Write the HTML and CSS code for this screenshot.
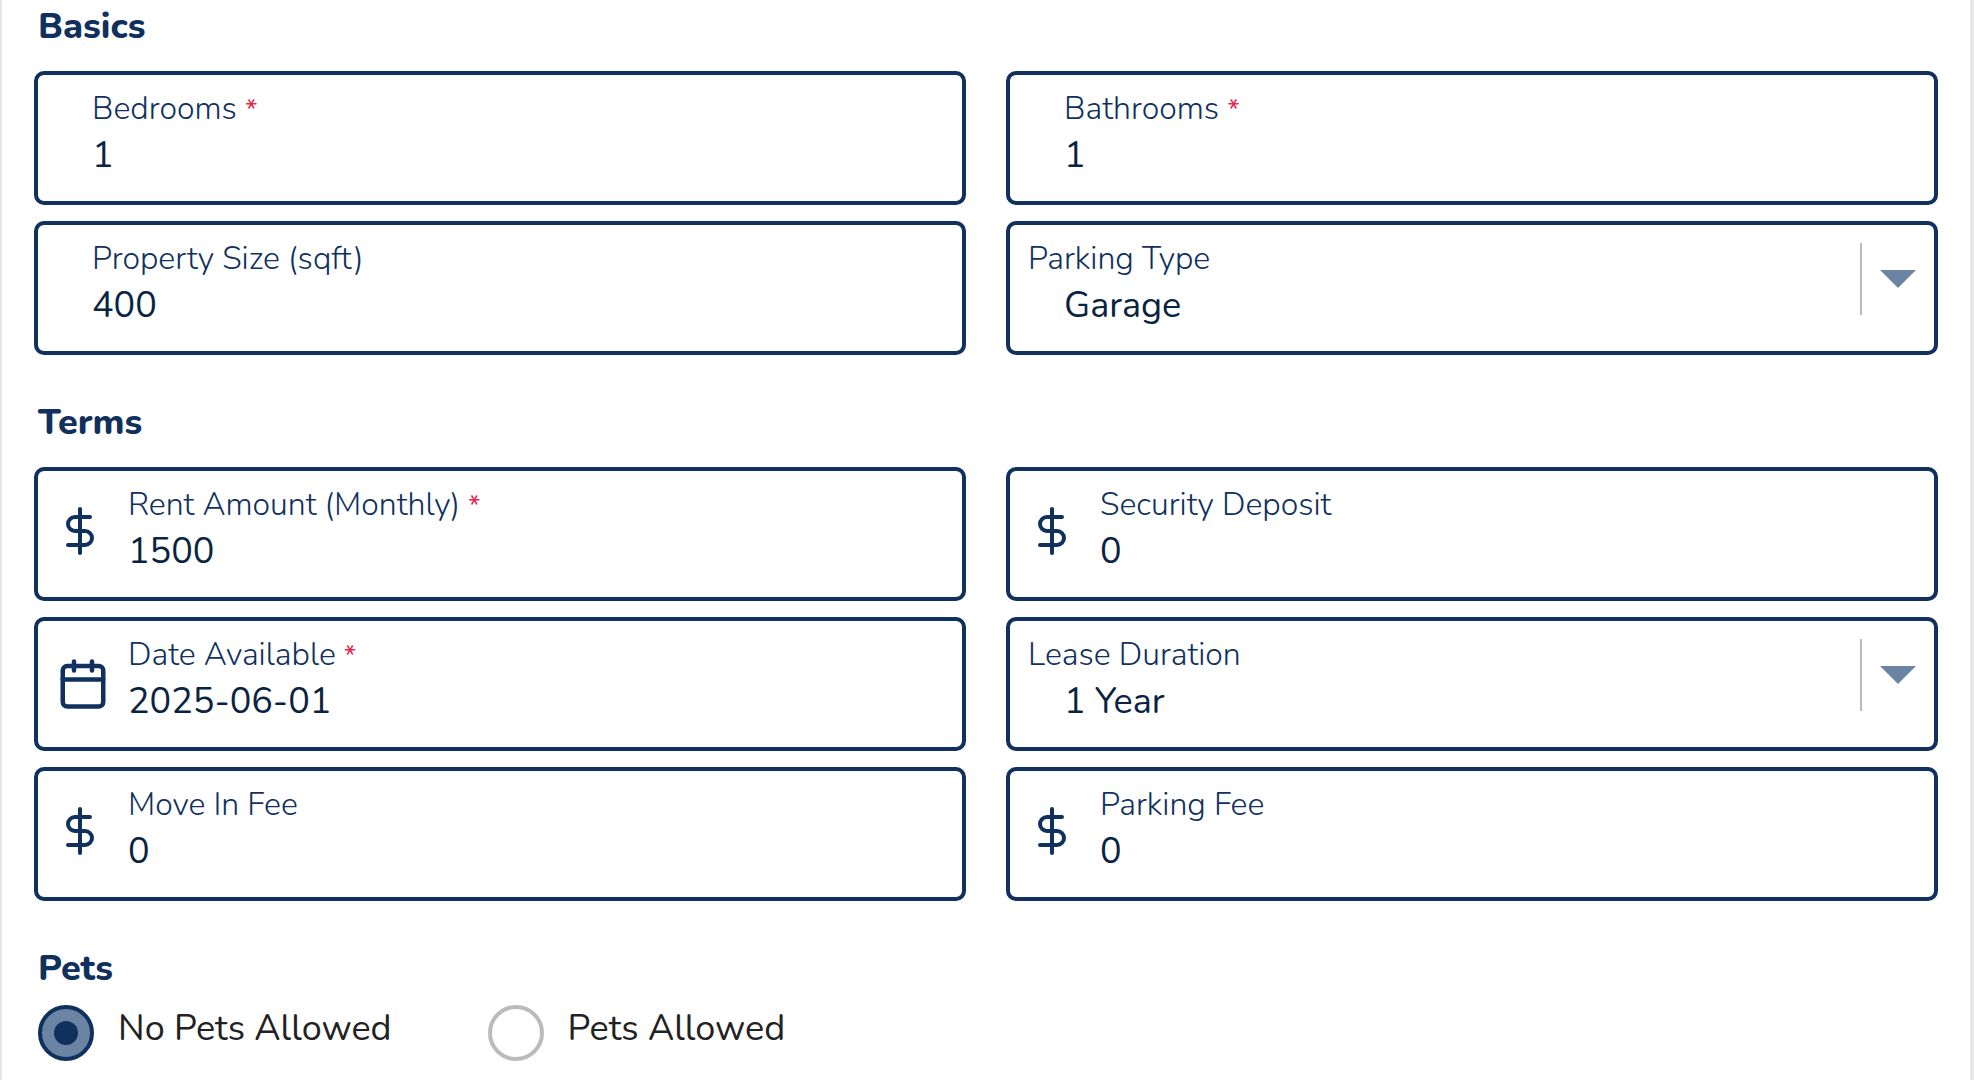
FILE: index.html
```html
<!DOCTYPE html>
<html lang="en">
<head>
<meta charset="utf-8">
<title>Property details</title>
<link rel="stylesheet" href="styles.css">
</head>
<body>
<svg class="sprite" aria-hidden="true">
  <symbol id="icon-dollar" viewBox="0 0 24 24">
    <line x1="12" y1="1" x2="12" y2="23"/>
    <path d="M17 5H9.5a3.5 3.5 0 0 0 0 7h5a3.5 3.5 0 0 1 0 7H6"/>
  </symbol>
  <symbol id="icon-calendar" viewBox="0 0 24 24">
    <rect x="3" y="4" width="18" height="18" rx="2" ry="2"/>
    <line x1="16" y1="2" x2="16" y2="6"/>
    <line x1="8" y1="2" x2="8" y2="6"/>
    <line x1="3" y1="10" x2="21" y2="10"/>
  </symbol>
  <symbol id="icon-caret" viewBox="0 0 36 18">
    <path d="M0 0h36L18 18z"/>
  </symbol>
</svg>
<form class="panel">
  <section class="section">
    <h2 class="section-title">Basics</h2>
    <div class="fields">
      <div class="field">
        <div class="field-body">
          <label class="field-label" for="bedrooms">Bedrooms <span class="required">*</span></label>
          <input class="field-value" id="bedrooms" type="text" value="1" required>
        </div>
      </div>
      <div class="field">
        <div class="field-body">
          <label class="field-label" for="bathrooms">Bathrooms <span class="required">*</span></label>
          <input class="field-value" id="bathrooms" type="text" value="1" required>
        </div>
      </div>
      <div class="field">
        <div class="field-body">
          <label class="field-label" for="size">Property Size (sqft)</label>
          <input class="field-value" id="size" type="text" value="400">
        </div>
      </div>
      <div class="field field-select">
        <div class="field-body">
          <label class="field-label" for="parking">Parking Type</label>
          <select class="field-value" id="parking"><option>Garage</option></select>
        </div>
        <span class="field-arrow"><svg class="caret" aria-hidden="true"><use href="#icon-caret"/></svg></span>
      </div>
    </div>
  </section>

  <section class="section">
    <h2 class="section-title">Terms</h2>
    <div class="fields">
      <div class="field field-with-icon">
        <span class="field-icon"><svg class="icon icon-dollar" aria-hidden="true"><use href="#icon-dollar"/></svg></span>
        <div class="field-body">
          <label class="field-label" for="rent">Rent Amount (Monthly) <span class="required">*</span></label>
          <input class="field-value" id="rent" type="text" value="1500" required>
        </div>
      </div>
      <div class="field field-with-icon">
        <span class="field-icon"><svg class="icon icon-dollar" aria-hidden="true"><use href="#icon-dollar"/></svg></span>
        <div class="field-body">
          <label class="field-label" for="deposit">Security Deposit</label>
          <input class="field-value" id="deposit" type="text" value="0">
        </div>
      </div>
      <div class="field field-with-icon">
        <span class="field-icon"><svg class="icon icon-calendar" aria-hidden="true"><use href="#icon-calendar"/></svg></span>
        <div class="field-body">
          <label class="field-label" for="available">Date Available <span class="required">*</span></label>
          <input class="field-value" id="available" type="text" value="2025-06-01" required>
        </div>
      </div>
      <div class="field field-select">
        <div class="field-body">
          <label class="field-label" for="lease">Lease Duration</label>
          <select class="field-value" id="lease"><option>1 Year</option></select>
        </div>
        <span class="field-arrow"><svg class="caret" aria-hidden="true"><use href="#icon-caret"/></svg></span>
      </div>
      <div class="field field-with-icon">
        <span class="field-icon"><svg class="icon icon-dollar" aria-hidden="true"><use href="#icon-dollar"/></svg></span>
        <div class="field-body">
          <label class="field-label" for="movein">Move In Fee</label>
          <input class="field-value" id="movein" type="text" value="0">
        </div>
      </div>
      <div class="field field-with-icon">
        <span class="field-icon"><svg class="icon icon-dollar" aria-hidden="true"><use href="#icon-dollar"/></svg></span>
        <div class="field-body">
          <label class="field-label" for="parkingfee">Parking Fee</label>
          <input class="field-value" id="parkingfee" type="text" value="0">
        </div>
      </div>
    </div>
  </section>

  <section class="section">
    <h2 class="section-title">Pets</h2>
    <div class="choices">
      <label class="choice"><input class="radio" type="radio" name="pets" checked>No Pets Allowed</label>
      <label class="choice"><input class="radio" type="radio" name="pets">Pets Allowed</label>
    </div>
  </section>
</form>
</body>
</html>
```

FILE: styles.css
```css
:root {
  --navy: #10305e;
  --ink: #0a2342;
  --steel: #6b84a3;
  --gray: #bbbbbb;
  --red: #e8274f;
}

*,
*::before {
  box-sizing: border-box;
}

body {
  margin: 0;
  background: #ffffff;
  font-family: Nunito, Lato, "Open Sans", sans-serif;
  font-size: 36px;
  line-height: 48px;
}

.sprite {
  display: none;
}

.panel {
  min-height: 100vh;
  padding: 3px 32px 16px;
  border-left: 2px solid #e6e6e6;
  border-right: 4px solid #e8e8e8;
}

.section + .section {
  margin-top: 44px;
}

.section-title {
  margin: 0;
  padding-left: 4px;
  color: var(--navy);
  font-size: 36px;
  font-weight: 800;
}

.fields {
  display: grid;
  grid-template-columns: repeat(2, minmax(0, 1fr));
  gap: 16px 40px;
  margin-top: 20px;
}

.field {
  display: flex;
  align-items: flex-start;
  min-height: 134px;
  padding: 12px 16px 12px 54px;
  border: 4px solid var(--navy);
  border-radius: 10px;
}

.field-with-icon {
  padding-left: 18px;
}

.field-select {
  padding-left: 18px;
  padding-right: 18px;
}

.field-body {
  display: flex;
  flex: 1;
  flex-direction: column;
  gap: 1px;
  min-width: 0;
}

.field-label {
  color: var(--navy);
  font-size: 32px;
  font-weight: 340;
  line-height: 44px;
}

.required {
  color: var(--red);
  font-size: 28px;
  font-weight: 400;
  line-height: 1;
}

.field-value {
  width: 100%;
  height: 48px;
  margin: 0;
  padding: 0;
  border: 0;
  outline: 0;
  appearance: none;
  background: transparent;
  color: var(--ink);
  font: inherit;
}

.field-select .field-value {
  padding-left: 36px;
}

.field-icon {
  flex: none;
  width: 72px;
  padding-top: 24px;
}

.icon {
  display: block;
  fill: none;
  stroke: var(--navy);
  stroke-width: 2;
  stroke-linecap: round;
  stroke-linejoin: round;
}

.icon-dollar {
  width: 48px;
  height: 48px;
}

.icon-calendar {
  width: 54px;
  height: 54px;
}

.field-arrow {
  display: flex;
  flex: none;
  align-items: center;
  height: 72px;
  margin-top: 6px;
  padding-left: 18px;
  border-left: 2px solid var(--gray);
}

.caret {
  display: block;
  width: 36px;
  height: 18px;
  fill: var(--steel);
}

.choices {
  display: flex;
  gap: 96px;
  margin-top: 12px;
  padding-left: 4px;
}

.choice {
  display: flex;
  align-items: flex-start;
  gap: 24px;
  color: #222222;
}

.radio {
  display: grid;
  place-items: center;
  width: 56px;
  height: 56px;
  margin: 0;
  border: 4px solid var(--gray);
  border-radius: 50%;
  appearance: none;
}

.radio:checked {
  border-color: var(--navy);
  background: var(--steel);
}

.radio:checked::before {
  content: "";
  width: 24px;
  height: 24px;
  border-radius: 50%;
  background: var(--navy);
}
```
